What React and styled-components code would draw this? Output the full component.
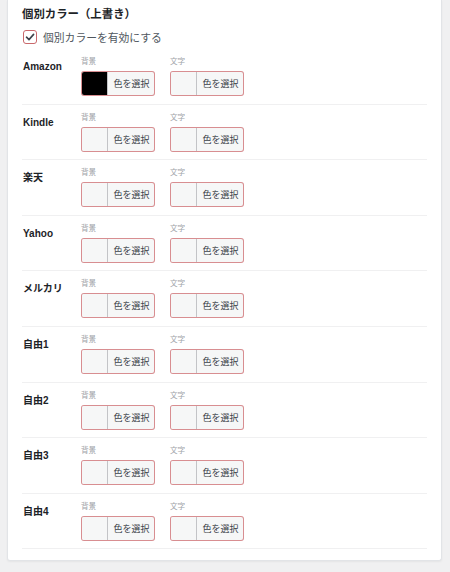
import React from "react";
import styled, { createGlobalStyle } from "styled-components";

const Global = createGlobalStyle`
  html, body { margin: 0; padding: 0; background: #f0f0f1; }
  body { font-family: "Noto Sans", "Noto Sans CJK JP", sans-serif; }
`;

const Page = styled.div`
  padding: 0 8px 10px 7px;
  width: 450px;
  box-sizing: border-box;
`;

const Card = styled.div`
  background: #fff;
  border: 1px solid #e2e4e7;
  border-top: none;
  border-radius: 0 0 3px 3px;
  box-shadow: 0 1px 2px rgba(0, 0, 0, 0.05);
  padding: 5px 14px 11px 14px;
`;

const Title = styled.div`
  font-size: 11.4px;
  font-weight: 700;
  line-height: 18px;
  color: #1d2327;
`;

const CheckRow = styled.label`
  display: flex;
  align-items: center;
  gap: 6px;
  height: 16px;
  margin: 6px 0 4px 1px;
  font-size: 10.8px;
  color: #50575e;
`;

const Box = styled.span`
  width: 12px;
  height: 12px;
  border: 1.5px solid #c9686b;
  border-radius: 3px;
  display: flex;
  align-items: center;
  justify-content: center;
  background: #fff;
`;

const Row = styled.div`
  display: flex;
  border-bottom: 1px solid #f0f0f1;
  padding: 6px 0 7.6px 1px;
  height: 41px;
`;

const RowLabel = styled.div`
  width: 58px;
  padding-top: 5px;
  font-family: "Liberation Sans", "Noto Sans CJK JP", sans-serif;
  font-size: 10px;
  font-weight: 700;
  line-height: 14px;
  color: #1d2327;
`;

const Group = styled.div`
  display: flex;
  flex-direction: column;
  gap: 4px;
  margin-right: 15px;
`;

const SubLabel = styled.div`
  font-size: 7.6px;
  line-height: 12px;
  color: #a0a3a8;
`;

const Picker = styled.div`
  display: flex;
  width: 74px;
  height: 25px;
  box-sizing: border-box;
  border-radius: 3px;
  overflow: hidden;
  background: #f6f7f7;
  box-shadow: inset 0 0 0 1px #d88e91;
`;

const Swatch = styled.span`
  width: 25px;
  margin: 1px 0 1px 1px;
  border-radius: 2px 0 0 2px;
  background: ${(p) => p.$color || "#f6f7f7"};
  border-right: 1px solid #c3c4c7;
`;

const PickText = styled.span`
  flex: 1;
  display: flex;
  align-items: center;
  justify-content: center;
  font-size: 9px;
  color: #3c434a;
`;

const rows = [
  { name: "Amazon", bg: "#000" },
  { name: "Kindle" },
  { name: "楽天" },
  { name: "Yahoo" },
  { name: "メルカリ" },
  { name: "自由1" },
  { name: "自由2" },
  { name: "自由3" },
  { name: "自由4" },
];

function ColorPick({ label, color }) {
  return (
    <Group>
      <SubLabel>{label}</SubLabel>
      <Picker>
        <Swatch $color={color} />
        <PickText>色を選択</PickText>
      </Picker>
    </Group>
  );
}

export default function App() {
  return (
    <Page>
      <Global />
      <Card>
        <Title>個別カラー（上書き）</Title>
        <CheckRow>
          <Box>
            <svg width="10" height="10" viewBox="0 0 10 10">
              <path d="M1.5 5.2 L4 7.6 L8.6 2.4" fill="none" stroke="#3c434a" strokeWidth="1.6" strokeLinecap="round" strokeLinejoin="round" />
            </svg>
          </Box>
          個別カラーを有効にする
        </CheckRow>
        {rows.map((r) => (
          <Row key={r.name}>
            <RowLabel>{r.name}</RowLabel>
            <ColorPick label="背景" color={r.bg} />
            <ColorPick label="文字" />
          </Row>
        ))}
      </Card>
    </Page>
  );
}
